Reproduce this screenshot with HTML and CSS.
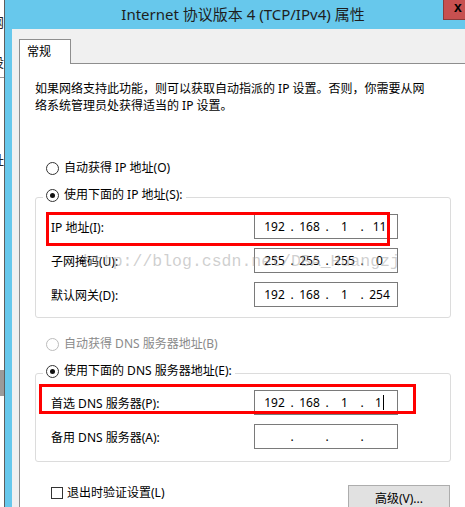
FILE: index.html
```html
<!DOCTYPE html>
<html lang="zh-CN">
<head>
    <meta charset="UTF-8">
    <title>Internet 协议版本 4 (TCP/IPv4) 属性</title>
    <link rel="stylesheet" href="styles.css">
</head>
<body>

<div class="screen">
    <!-- window behind the dialog, only a sliver shows -->
    <div class="behind">
        <div class="behind-text">
            <p class="b1">网</p>
            <p class="b2">设</p>
            <div class="b-line"></div>
            <p class="b3">址</p>
            <div class="b-block"></div>
        </div>
    </div>

    <div class="window">
        <div class="titlebar">
            <div class="title">Internet 协议版本 4 (TCP/IPv4) 属性</div>
            <div class="close">x</div>
        </div>

        <div class="frame">
            <div class="tabs">
                <div class="tab">常规</div>
            </div>

            <div class="page">
                <p class="intro">如果网络支持此功能，则可以获取自动指派的 IP 设置。否则，你需要从网<br>络系统管理员处获得适当的 IP 设置。</p>

                <div class="radio first"><span class="dot"></span>自动获得 IP 地址(O)</div>

                <fieldset class="group">
                    <legend><span class="radio"><span class="dot on"></span>使用下面的 IP 地址(S):</span></legend>
                    <div class="fields">
                        <label>IP 地址(I):</label>
                        <div class="ip"><span class="oct">192</span><span class="sep">.</span><span class="oct">168</span><span class="sep">.</span><span class="oct">1</span><span class="sep">.</span><span class="oct">11</span></div>

                        <label>子网掩码(U):</label>
                        <div class="ip"><span class="oct">255</span><span class="sep">.</span><span class="oct">255</span><span class="sep">.</span><span class="oct">255</span><span class="sep">.</span><span class="oct">0</span></div>

                        <label>默认网关(D):</label>
                        <div class="ip"><span class="oct">192</span><span class="sep">.</span><span class="oct">168</span><span class="sep">.</span><span class="oct">1</span><span class="sep">.</span><span class="oct">254</span></div>
                    </div>
                </fieldset>

                <div class="radio disabled"><span class="dot"></span>自动获得 DNS 服务器地址(B)</div>

                <fieldset class="group">
                    <legend><span class="radio"><span class="dot on"></span>使用下面的 DNS 服务器地址(E):</span></legend>
                    <div class="fields dns">
                        <label>首选 DNS 服务器(P):</label>
                        <div class="ip"><span class="oct">192</span><span class="sep">.</span><span class="oct">168</span><span class="sep">.</span><span class="oct">1</span><span class="sep">.</span><span class="oct">1<span class="caret"></span></span></div>

                        <label>备用 DNS 服务器(A):</label>
                        <div class="ip"><span class="oct"></span><span class="sep">.</span><span class="oct"></span><span class="sep">.</span><span class="oct"></span><span class="sep">.</span><span class="oct"></span></div>
                    </div>
                </fieldset>

                <div class="footer">
                    <div class="check"><span class="box"></span>退出时验证设置(L)</div>
                    <div class="button">高级(V)...</div>
                </div>
            </div>
        </div>
    </div>
</div>

<!-- annotations drawn over the screenshot -->
<div class="mark mark-ip"></div>
<div class="mark mark-dns"></div>
<div class="watermark">http://blog.csdn.net/DBA_Huangzj</div>

</body>
</html>
```

FILE: styles.css
```css
body {
    margin: 0;
    width: 465px;
    height: 507px;
    overflow: hidden;
    position: relative;
    background: #fff;
    font-family: "Noto Sans", "Noto Sans CJK SC", sans-serif;
    font-size: 12px;
    color: #000;
}
p {
    margin: 0;
}
.screen {
    display: flex;
    height: 507px;
}
.behind {
    width: 4px;
    background: #fff;
    border-right: 1px solid #5e5e5e;
    overflow: hidden;
}
.behind-text {
    width: 40px;
    margin-left: -36px;
    text-align: right;
    font-family: "Noto Sans CJK SC", sans-serif;
    font-size: 13px;
    line-height: 16px;
    color: #222;
}
.b1 { margin-top: 14px; }
.b2 { margin-top: 24px; }
.b-line {
    margin-top: 7px;
    border-top: 1px solid #9a9a9a;
}
.b3 { margin-top: 74px; }
.b-block {
    margin-top: 202px;
    height: 26px;
    background: #9a9a9a;
}
.window {
    flex: 1;
    min-width: 0;
    display: flex;
    flex-direction: column;
    background: #67c8ec;
}
.titlebar {
    display: flex;
    align-items: flex-start;
    height: 29px;
}
.title {
    flex: 1;
    text-align: center;
    padding-left: 38px;
    font-size: 15px;
    line-height: 29px;
    color: #1e1e1e;
}
.close {
    width: 22px;
    height: 20px;
    box-sizing: border-box;
    background: #c75050;
    border-left: 1px solid #8b3b3b;
    border-bottom: 1px solid #8b3b3b;
    padding-left: 10px;
    font-family: "Liberation Sans", sans-serif;
    font-weight: bold;
    font-size: 14px;
    line-height: 15px;
    overflow: hidden;
}
.frame {
    flex: 1;
    display: flex;
    flex-direction: column;
    margin-left: 7px;
    padding: 10px 0 0 7px;
    background: #f0f0f0;
}
.tabs {
    display: flex;
}
.tab {
    position: relative;
    width: 52px;
    height: 25px;
    box-sizing: border-box;
    margin-bottom: -1px;
    padding-left: 7px;
    border: 1px solid #8e8e8e;
    border-bottom: none;
    background: #fff;
    line-height: 23px;
}
.page {
    flex: 1;
    background: #fff;
    border-top: 1px solid #8e8e8e;
    border-left: 1px solid #8e8e8e;
    padding-left: 15px;
}
.intro {
    margin-top: 16px;
    line-height: 17px;
}
.radio {
    display: flex;
    align-items: center;
    gap: 5px;
    height: 20px;
    line-height: 20px;
}
.dot {
    display: flex;
    align-items: center;
    justify-content: center;
    width: 13px;
    height: 13px;
    box-sizing: border-box;
    border: 1px solid #333;
    border-radius: 50%;
    background: #fff;
}
.dot.on::after {
    content: "";
    width: 5px;
    height: 5px;
    border-radius: 50%;
    background: #111;
}
.first {
    margin: 44px 0 0 11px;
}
.disabled {
    margin: 16px 0 0 11px;
    color: #8a8a8a;
}
.disabled .dot {
    border-color: #bcbcbc;
}
.group {
    width: 416px;
    box-sizing: border-box;
    min-width: 0;
    margin: 7px 0 0;
    padding: 0;
    border: 1px solid #dcdcdc;
    border-radius: 3px;
}
.group legend {
    margin-left: 7px;
    padding: 0 3px 4px;
}
.fields {
    display: grid;
    grid-template-columns: 203px 144px;
    row-gap: 9px;
    align-items: center;
    padding: 5px 0 10px 15px;
}
.fields.dns {
    padding-bottom: 12px;
}
.ip {
    display: flex;
    align-items: center;
    height: 25px;
    box-sizing: border-box;
    padding-left: 5px;
    border: 1px solid #7a7a7a;
    line-height: 16px;
}
.oct {
    width: 29px;
    text-align: center;
}
.sep {
    width: 6px;
    text-align: center;
}
.caret {
    display: inline-block;
    width: 1px;
    height: 15px;
    margin-left: 1px;
    vertical-align: -3px;
    background: #000;
}
.footer {
    display: flex;
    justify-content: space-between;
    align-items: flex-start;
    width: 416px;
    margin-top: 23px;
}
.check {
    display: flex;
    align-items: center;
    gap: 4px;
    margin-left: 16px;
    height: 16px;
    line-height: 16px;
}
.box {
    width: 12px;
    height: 12px;
    box-sizing: border-box;
    border: 1px solid #333;
    background: #fff;
}
.button {
    width: 102px;
    height: 26px;
    box-sizing: border-box;
    margin-right: 1px;
    border: 1px solid #adadad;
    background: #e1e1e1;
    text-align: center;
    line-height: 26px;
}
.mark {
    position: absolute;
    box-sizing: border-box;
    border: 3px solid #f00;
}
.mark-ip {
    left: 46px;
    top: 212px;
    width: 344px;
    height: 34px;
}
.mark-dns {
    left: 39px;
    top: 384px;
    width: 377px;
    height: 30px;
}
.watermark {
    position: absolute;
    left: 83px;
    top: 253px;
    font-family: "Liberation Mono", monospace;
    font-size: 16.5px;
    line-height: 17px;
    color: rgba(160, 160, 160, 0.5);
    white-space: nowrap;
}
```
